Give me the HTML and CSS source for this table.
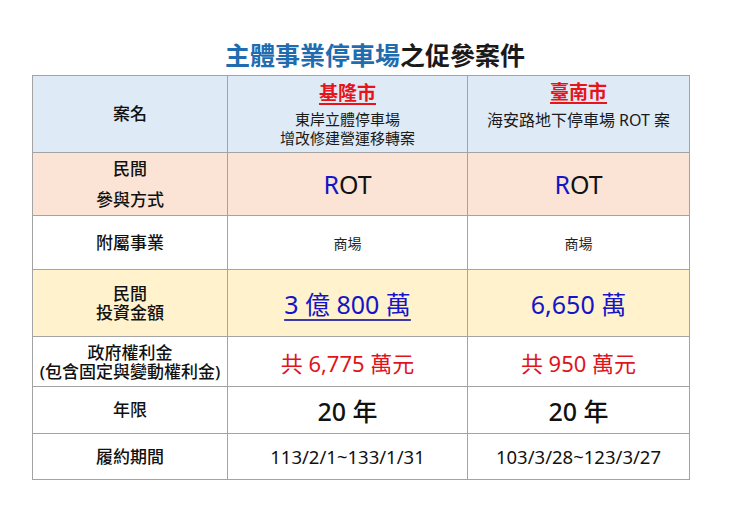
FILE: index.html
```html
<!DOCTYPE html>
<html lang="zh-Hant">
<head>
<meta charset="utf-8">
<title>主體事業停車場之促參案件</title>
<link rel="stylesheet" href="styles.css">
</head>
<body>
<h1 class="title"><span class="title-blue">主體事業停車場</span>之促參案件</h1>
<table class="grid">
  <colgroup>
    <col class="c1"><col class="c2"><col class="c3">
  </colgroup>
  <tr class="r-head">
    <td class="label">案名</td>
    <td>
      <div class="city">基隆市</div>
      <div class="case">東岸立體停車場<br>增改修建營運移轉案</div>
    </td>
    <td>
      <div class="city">臺南市</div>
      <div class="case case-one">海安路地下停車場 ROT 案</div>
    </td>
  </tr>
  <tr class="r-rot">
    <td class="label wide">民間<br>參與方式</td>
    <td class="big"><span class="r">R</span>OT</td>
    <td class="big"><span class="r">R</span>OT</td>
  </tr>
  <tr class="r-biz">
    <td class="label">附屬事業</td>
    <td class="small">商場</td>
    <td class="small">商場</td>
  </tr>
  <tr class="r-inv">
    <td class="label tight">民間<br>投資金額</td>
    <td class="money"><span class="ul">3 億 800 萬</span></td>
    <td class="money">6,650 萬</td>
  </tr>
  <tr class="r-fee">
    <td class="label tight">政府權利金<br>(包含固定與變動權利金)</td>
    <td class="fee">共 6,775 萬元</td>
    <td class="fee">共 950 萬元</td>
  </tr>
  <tr class="r-year">
    <td class="label">年限</td>
    <td class="year">20 年</td>
    <td class="year">20 年</td>
  </tr>
  <tr class="r-date">
    <td class="label">履約期間</td>
    <td class="date">113/2/1~133/1/31</td>
    <td class="date">103/3/28~123/3/27</td>
  </tr>
</table>
</body>
</html>
```
FILE: styles.css
```css
html, body {
  margin: 0;
  padding: 0;
  background: #ffffff;
}
body {
  font-family: "Noto Sans", "Noto Sans CJK TC", sans-serif;
  color: #111111;
  padding-top: 40px;
}
.title {
  margin: 0 0 5px 0;
  text-align: center;
  font-size: 25px;
  line-height: 30px;
  font-weight: 700;
  color: #1a1a1a;
}
.title-blue {
  color: #1f6cb0;
}
.grid {
  margin-left: 32px;
  border-collapse: collapse;
  table-layout: fixed;
  width: 658px;
}
.c1 { width: 195px; }
.c2 { width: 240px; }
.c3 { width: 222px; }
.grid td {
  border: 1px solid #a3a3a3;
  padding: 0;
  text-align: center;
  vertical-align: middle;
}
.r-head td { height: 76px; background: #deeaf6; }
.r-rot td { height: 61px; background: #fbe4d5; }
.r-biz td { height: 53px; }
.r-inv td { height: 66px; background: #fff2cc; }
.r-fee td { height: 49px; }
.r-year td { height: 46px; }
.r-date td { height: 45px; }
.label {
  font-size: 17px;
  font-weight: 500;
  line-height: 22px;
  color: #111111;
}
.label.wide { line-height: 31px; }
.label.tight { line-height: 19px; }
.city {
  color: #e8141b;
  font-size: 19px;
  font-weight: 700;
  line-height: 24px;
  text-decoration: underline;
  text-underline-offset: 3px;
  text-decoration-thickness: 2px;
  padding-top: 2px;
}
.case {
  font-size: 15px;
  line-height: 19px;
  color: #1a1a1a;
  margin-top: 5px;
  padding-bottom: 2px;
}
.case-one {
  font-size: 16px;
  padding-top: 2px;
  padding-bottom: 20px;
}
.big {
  font-size: 25px;
  color: #111111;
}
.r { color: #1414c8; }
.small {
  font-size: 14px;
  color: #222222;
}
.money {
  font-size: 25px;
  color: #1414c8;
}
.ul {
  text-decoration: underline;
  text-decoration-color: #3a3aa8;
  text-decoration-thickness: 2px;
  text-underline-offset: 5px;
}
.fee {
  font-size: 22px;
  color: #e0141b;
}
.year {
  font-size: 25px;
  font-weight: 500;
  color: #111111;
}
.date {
  font-size: 18.5px;
  color: #111111;
}
```
